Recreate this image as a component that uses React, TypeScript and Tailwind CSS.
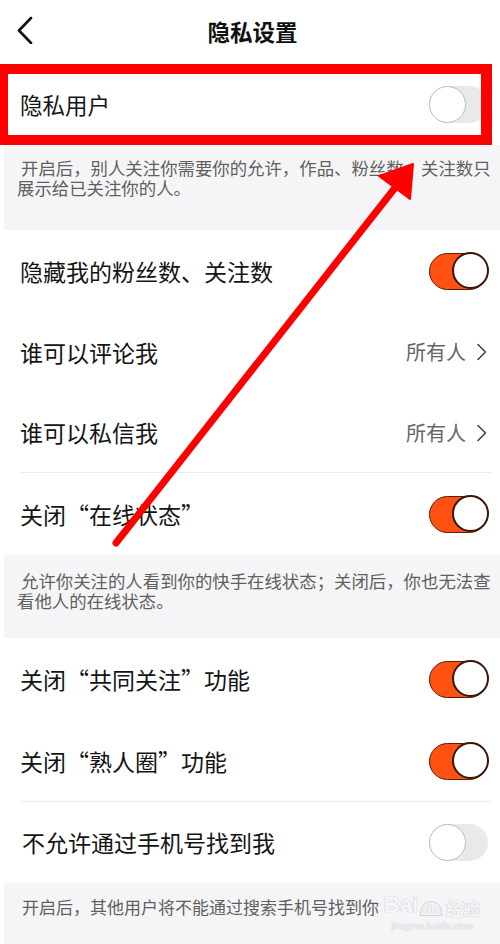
import React from "react";

function Toggle({ on }: { on: boolean }) {
  if (on) {
    return (
      <div className="relative w-[59px] h-[37px] rounded-full bg-[#ff5212] border-[1.5px] border-[#5c1c06] shrink-0">
        <div className="absolute right-[-1.5px] top-[-1.5px] w-[37px] h-[37px] rounded-full bg-white border-2 border-[#3a1406]" />
      </div>
    );
  }
  return (
    <div className="relative w-[59px] h-[37px] rounded-full bg-[#e9e9eb] shrink-0">
      <div className="absolute left-0 top-0 w-[37px] h-[37px] rounded-full bg-white border-[1.5px] border-[#bdbdbd]" />
    </div>
  );
}

function Row({
  label,
  right,
  divider,
}: {
  label: string;
  right: React.ReactNode;
  divider?: boolean;
}) {
  return (
    <div className="relative flex items-center justify-between h-[82px] pl-[20px] pr-[12px]">
      <span className="text-[23px] text-[#141414] leading-none">{label}</span>
      {right}
      {divider && <div className="absolute left-[20px] right-[8px] bottom-0 h-px bg-[#ececee]" />}
    </div>
  );
}

function Who() {
  return (
    <div className="flex items-center gap-[10px]">
      <span className="text-[20px] text-[#666] leading-none">所有人</span>
      <svg width="11" height="18" viewBox="0 0 11 18" className="mr-[1px]">
        <polyline points="2,1.5 9.5,9 2,16.5" fill="none" stroke="#444" strokeWidth="1.6" strokeLinecap="round" strokeLinejoin="round" />
      </svg>
    </div>
  );
}

export default function App() {
  const wm = { textShadow: "0 0 1px #c4c4ca, 0 0 1px #c4c4ca" };
  return (
    <div
      className="relative w-[500px] h-[944px] overflow-hidden bg-white"
      style={{ fontFamily: '"Noto Sans CJK SC", "Noto Sans", sans-serif' }}
    >
      {/* Header */}
      <div className="grid grid-cols-[1fr_auto_1fr] items-center h-[64px] pl-[17px]">
        <svg width="16" height="28" viewBox="0 0 16 28" className="mt-[-4px]">
          <polyline points="14,2 2,14.5 14,27" fill="none" stroke="#111" strokeWidth="2.6" strokeLinecap="round" strokeLinejoin="round" />
        </svg>
        <span className="text-[22.5px] font-semibold text-[#111] leading-none mt-[-1px] ml-[-12px]">隐私设置</span>
        <span />
      </div>

      <div className="h-[81px] flex items-center justify-between pl-[20px] pr-[12px]">
        <span className="text-[22.5px] text-[#141414] leading-none">隐私用户</span>
        <Toggle on={false} />
      </div>

      <div className="bg-[#f5f5f7] h-[85px] pt-[13px] pl-[13px] pr-[8px] ml-[4px]">
        <p className="text-[17.4px] leading-[20px] text-[#5f5f5f] indent-[4px]">
          开启后，别人关注你需要你的允许，作品、粉丝数、关注数只展示给已关注你的人。
        </p>
      </div>

      <Row label="隐藏我的粉丝数、关注数" right={<Toggle on />} />
      <div className="h-[80px] flex items-center justify-between pl-[20px] pr-[12px]">
        <span className="text-[23px] text-[#141414] leading-none">谁可以评论我</span>
        <Who />
      </div>
      <div className="relative h-[81px] flex items-center justify-between pl-[20px] pr-[12px]">
        <span className="text-[23px] text-[#141414] leading-none">谁可以私信我</span>
        <Who />
        <div className="absolute left-[20px] right-[8px] bottom-0 h-px bg-[#ececee]" />
      </div>
      <Row label="关闭“在线状态”" right={<Toggle on />} />

      <div className="bg-[#f5f5f7] h-[83px] pt-[16px] pl-[13px] pr-[8px] ml-[4px]">
        <p className="text-[17.4px] leading-[20px] text-[#5f5f5f] indent-[4px]">
          允许你关注的人看到你的快手在线状态；关闭后，你也无法查看他人的在线状态。
        </p>
      </div>

      <Row label="关闭“共同关注”功能" right={<Toggle on />} />
      <Row label="关闭“熟人圈”功能" right={<Toggle on />} divider />
      <div className="h-[81px] flex items-center justify-between pl-[22px] pr-[12px]">
        <span className="text-[23px] text-[#141414] leading-none">不允许通过手机号找到我</span>
        <Toggle on={false} />
      </div>

      <div className="bg-[#f5f5f7] h-[61px] pt-[14px] pl-[18px] ml-[4px]">
        <p className="text-[17px] leading-[20px] text-[#5f5f5f]">开启后，其他用户将不能通过搜索手机号找到你</p>
      </div>

      {/* Red annotation box */}
      <div className="absolute left-0 top-[64px] w-[492px] h-[81px] border-t-[10px] border-b-[10px] border-l-[8px] border-r-[11px] border-[#ff0000]" />

      {/* Red arrow */}
      <svg className="absolute left-0 top-0" width="500" height="944" viewBox="0 0 500 944">
        <line x1="116" y1="543" x2="398" y2="184" stroke="#ff0000" strokeWidth="7" strokeLinecap="round" />
        <polygon points="413,164 379,176 410,199" fill="#ff0000" stroke="#ff0000" strokeWidth="2" strokeLinejoin="round" />
      </svg>

      {/* Baidu watermark */}
      <div className="absolute left-[384px] top-[894px] flex flex-col items-center text-[#f7f7f9]">
        <div className="flex items-end leading-none">
          <span className="text-[22px] font-bold" style={{ ...wm, fontFamily: '"Liberation Sans", sans-serif' }}>Bai</span>
          <span className="text-[13px] font-bold mx-[2px] rounded-t-full border border-[#cfcfd4] text-[#f7f7f9] px-[2px]" style={{ ...wm, fontFamily: '"Liberation Sans", sans-serif' }}>du</span>
          <span className="text-[17px] font-bold ml-[2px]" style={wm}>经验</span>
        </div>
        <span className="text-[11px] leading-none mt-[4px]" style={{ ...wm, fontFamily: '"Liberation Serif", serif' }}>jingyan.baidu.com</span>
      </div>
    </div>
  );
}
